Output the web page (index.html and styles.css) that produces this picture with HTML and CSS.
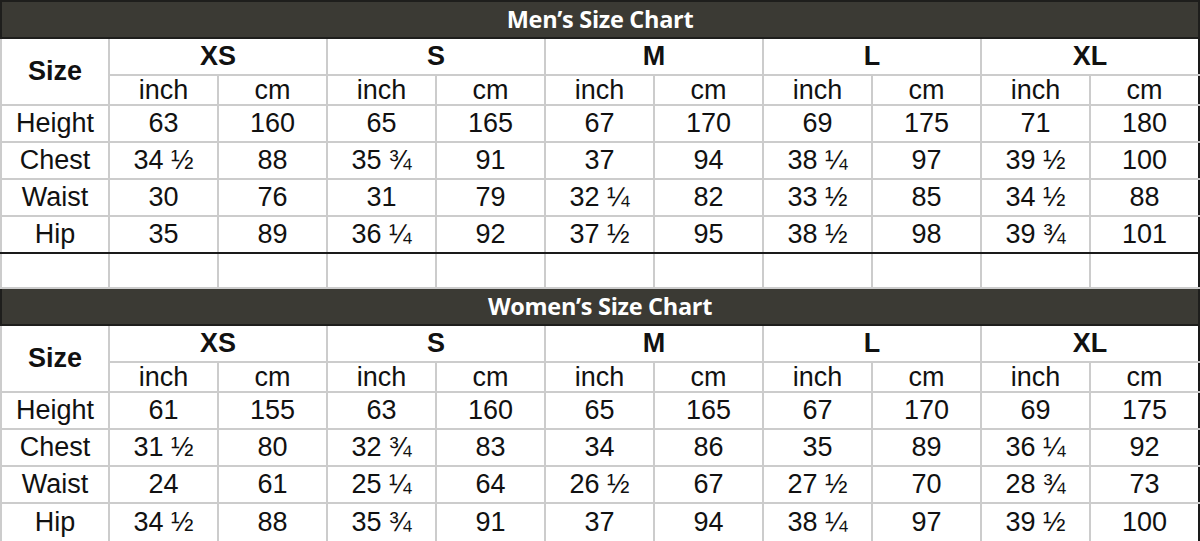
FILE: index.html
```html
<!DOCTYPE html>
<html>
<head>
<meta charset="utf-8">
<link rel="stylesheet" href="styles.css">
</head>
<body>
<table class="chart">
<colgroup>
<col class="c-size"><col><col><col><col><col><col><col><col><col><col>
</colgroup>
<tbody>
<tr class="r-title"><td colspan="11" class="title">Men’s Size Chart</td></tr>
<tr class="r-size"><td rowspan="2" class="size">Size</td><td colspan="2" class="sz">XS</td><td colspan="2" class="sz">S</td><td colspan="2" class="sz">M</td><td colspan="2" class="sz">L</td><td colspan="2" class="sz">XL</td></tr>
<tr class="r-unit"><td>inch</td><td>cm</td><td>inch</td><td>cm</td><td>inch</td><td>cm</td><td>inch</td><td>cm</td><td>inch</td><td>cm</td></tr>
<tr class="r-data"><td>Height</td><td>63</td><td>160</td><td>65</td><td>165</td><td>67</td><td>170</td><td>69</td><td>175</td><td>71</td><td>180</td></tr>
<tr class="r-data"><td>Chest</td><td>34 ½</td><td>88</td><td>35 ¾</td><td>91</td><td>37</td><td>94</td><td>38 ¼</td><td>97</td><td>39 ½</td><td>100</td></tr>
<tr class="r-data"><td>Waist</td><td>30</td><td>76</td><td>31</td><td>79</td><td>32 ¼</td><td>82</td><td>33 ½</td><td>85</td><td>34 ½</td><td>88</td></tr>
<tr class="r-data r-last"><td>Hip</td><td>35</td><td>89</td><td>36 ¼</td><td>92</td><td>37 ½</td><td>95</td><td>38 ½</td><td>98</td><td>39 ¾</td><td>101</td></tr>
<tr class="r-blank"><td></td><td></td><td></td><td></td><td></td><td></td><td></td><td></td><td></td><td></td><td></td></tr>
<tr class="r-title"><td colspan="11" class="title">Women’s Size Chart</td></tr>
<tr class="r-size"><td rowspan="2" class="size">Size</td><td colspan="2" class="sz">XS</td><td colspan="2" class="sz">S</td><td colspan="2" class="sz">M</td><td colspan="2" class="sz">L</td><td colspan="2" class="sz">XL</td></tr>
<tr class="r-unit"><td>inch</td><td>cm</td><td>inch</td><td>cm</td><td>inch</td><td>cm</td><td>inch</td><td>cm</td><td>inch</td><td>cm</td></tr>
<tr class="r-data"><td>Height</td><td>61</td><td>155</td><td>63</td><td>160</td><td>65</td><td>165</td><td>67</td><td>170</td><td>69</td><td>175</td></tr>
<tr class="r-data"><td>Chest</td><td>31 ½</td><td>80</td><td>32 ¾</td><td>83</td><td>34</td><td>86</td><td>35</td><td>89</td><td>36 ¼</td><td>92</td></tr>
<tr class="r-data"><td>Waist</td><td>24</td><td>61</td><td>25 ¼</td><td>64</td><td>26 ½</td><td>67</td><td>27 ½</td><td>70</td><td>28 ¾</td><td>73</td></tr>
<tr class="r-data r-last r-end"><td>Hip</td><td>34 ½</td><td>88</td><td>35 ¾</td><td>91</td><td>37</td><td>94</td><td>38 ¼</td><td>97</td><td>39 ½</td><td>100</td></tr>
</tbody>
</table>
</body>
</html>
```

FILE: styles.css
```css
html, body {
  margin: 0;
  padding: 0;
  background: #ffffff;
}
.chart {
  width: 1200px;
  border-collapse: collapse;
  table-layout: fixed;
  font-family: "Liberation Sans", Arial, sans-serif;
  font-size: 27px;
  color: #111111;
}
.c-size {
  width: 108px;
}
.chart td {
  border: 2px solid #cccccc;
  text-align: center;
  vertical-align: middle;
  padding: 0;
  line-height: 1;
  white-space: nowrap;
  overflow: hidden;
}
.chart td:last-child {
  border-right: 2px solid #1a1a1a;
}
.r-title {
  height: 37px;
}
.chart td.title {
  background: #3b3a34;
  border: 2px solid #1e1e1c;
  color: #ffffff;
  font-family: "Open Sans", "Noto Sans", sans-serif;
  font-weight: 700;
  font-size: 23.5px;
  letter-spacing: -0.3px;
}
.r-size {
  height: 37px;
}
.size, .sz {
  font-weight: 700;
}
.r-unit {
  height: 30px;
}
.r-data {
  height: 37px;
}
.r-last td {
  border-bottom: 2px solid #1a1a1a;
}
.r-end {
  height: 39px;
}
.r-blank {
  height: 35px;
}
```
